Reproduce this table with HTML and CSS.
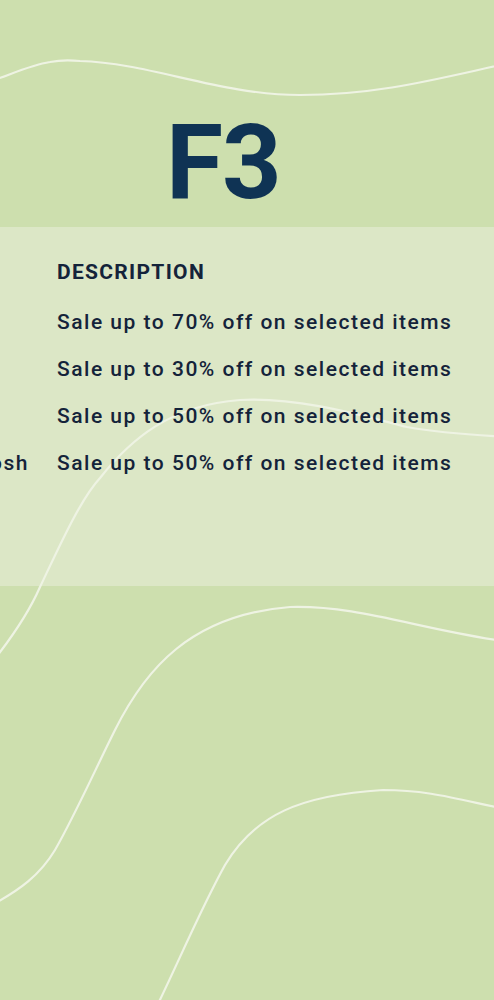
FILE: index.html
```html
<!DOCTYPE html>
<html lang="en">
<head>
<meta charset="utf-8">
<title>F3</title>
<link rel="stylesheet" href="styles.css">
</head>
<body>
<div class="page">
  <header class="hero">
    <h1 class="title">F3</h1>
  </header>
  <section class="band">
    <div class="table">
      <div class="row head">
        <div class="cell name"><span></span></div>
        <div class="cell desc">DESCRIPTION</div>
      </div>
      <div class="row">
        <div class="cell name"><span></span></div>
        <div class="cell desc">Sale up to 70% off on selected items</div>
      </div>
      <div class="row">
        <div class="cell name"><span></span></div>
        <div class="cell desc">Sale up to 30% off on selected items</div>
      </div>
      <div class="row">
        <div class="cell name"><span></span></div>
        <div class="cell desc">Sale up to 50% off on selected items</div>
      </div>
      <div class="row">
        <div class="cell name"><span>Mackintosh</span></div>
        <div class="cell desc">Sale up to 50% off on selected items</div>
      </div>
    </div>
  </section>
  <svg class="waves" width="494" height="1000" viewBox="0 0 494 1000" aria-hidden="true">
    <path d="M-20 84 C0 80 25 66 50 62 C60 60 70 60 80 61 C150 63 220 95 300 95 C380 95 440 78 510 63"/>
    <path d="M-10 665 C10 640 30 610 40 587 C60 545 80 500 100 478 C130 440 170 405 240 400 C300 397 360 415 407 427 C440 433 470 435 510 437"/>
    <path d="M-10 906 C20 890 40 875 55 850 C75 815 95 770 115 730 C145 670 190 615 290 607 C360 605 420 630 510 642"/>
    <path d="M155 1010 C175 970 200 910 225 865 C255 815 300 795 383 790 C430 790 460 800 510 810"/>
  </svg>
</div>
</body>
</html>
```

FILE: styles.css
```css
* { box-sizing: border-box; }
html, body {
  margin: 0;
  padding: 0;
  background: #cddfae;
}
body {
  font-family: Roboto, "Liberation Sans", sans-serif;
  color: #14233a;
}
.page {
  position: relative;
  width: 494px;
  height: 1000px;
  overflow: hidden;
  background: #cddfae;
}
.hero {
  height: 227px;
  padding-top: 111px;
  padding-left: 166px;
}
.title {
  position: relative;
  z-index: 2;
  margin: 0;
  font-size: 104px;
  line-height: 104px;
  font-weight: 700;
  color: #0f3354;
  letter-spacing: -1px;
}
.band {
  height: 359px;
  background: #dce7c6;
  padding-top: 22px;
}
.table {
  position: relative;
  z-index: 2;
  display: flex;
  flex-direction: column;
}
.row {
  display: flex;
  gap: 28px;
  font-size: 21px;
  line-height: 47px;
  font-weight: 500;
  letter-spacing: 1.5px;
  white-space: nowrap;
}
.row.head {
  font-weight: 700;
  margin-bottom: 3px;
  letter-spacing: 1.3px;
}
.cell.name {
  width: 29px;
  flex: none;
  display: flex;
  justify-content: flex-end;
  overflow: hidden;
}
.cell.name span { flex: none; }
.waves {
  position: absolute;
  left: 0;
  top: 0;
  z-index: 1;
  pointer-events: none;
}
.waves path {
  fill: none;
  stroke: #eef3e3;
  stroke-width: 2.2;
}
```
